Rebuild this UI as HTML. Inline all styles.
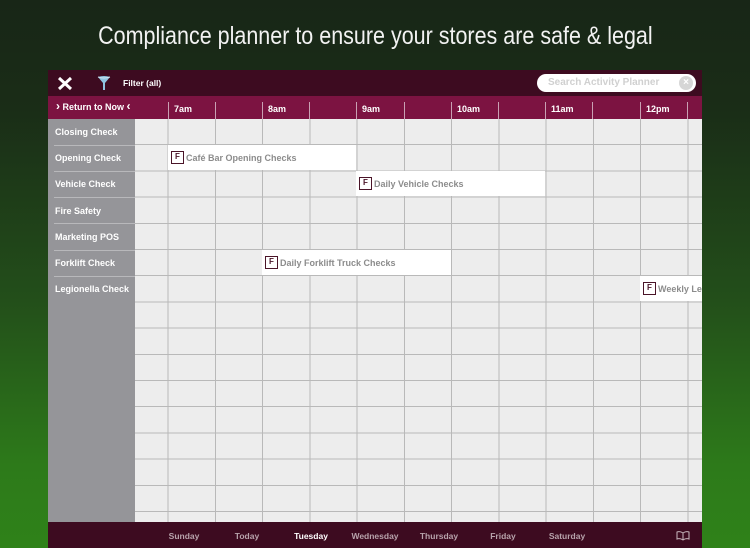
<!DOCTYPE html>
<html><head><meta charset="utf-8"><style>
*{margin:0;padding:0;box-sizing:border-box}
body{width:750px;height:548px;overflow:hidden;position:relative;font-family:"Liberation Sans",sans-serif;
background:linear-gradient(180deg,#182617 0%,#1a2d17 20%,#234f1a 55%,#2d7a1a 85%,#2f8219 100%)}
.a{position:absolute}
.title{left:0;width:750px;top:20px;text-align:center;color:#f2f2f2;font-size:25px;line-height:32px;white-space:nowrap}
.title span{display:inline-block;transform:scaleX(0.86);transform-origin:center}
.top{left:48px;top:70px;width:654px;height:26px;background:#3d0b20}
.hdr{left:48px;top:96px;width:654px;height:23px;background:#7c1341}
.lab{left:48px;top:119px;width:87px;height:403px;background:#959599}
.grid{left:135px;top:119px;width:567px;height:403px;background-color:#ededed;
background-image:repeating-linear-gradient(90deg,transparent 0,transparent 32.5px,#b9b9b9 32.5px,#b9b9b9 33.5px,transparent 33.5px,transparent 47.25px),
repeating-linear-gradient(180deg,transparent 0,transparent 25.2px,#b9b9b9 25.2px,#b9b9b9 26.2px);}
.bot{left:48px;top:522px;width:654px;height:26px;background:#3d0b20}
.lt{color:#fff;font-weight:bold;font-size:9px;left:55px}
.sep{left:54px;width:81px;height:1px;background:#b8b8bb}
.tick{top:102px;width:1px;height:17px;background:#c9a0b3}
.hl{top:104px;color:#fff;font-weight:bold;font-size:9px}
.ev{height:25px;background:#fff;color:#8c8c8c;font-weight:bold;font-size:9px;line-height:26px;padding-left:18px;white-space:nowrap;overflow:hidden}
.ev i{position:absolute;left:3px;top:6px;width:13px;height:13px;border:1.5px solid #4a1428;font-style:normal;color:#4a1428;font-size:8px;font-weight:bold;line-height:10px;text-align:center}
.day{top:531px;color:#b7a3ab;font-weight:bold;font-size:8.5px;transform:translateX(-50%)}
</style></head><body>
<div class="a title"><span>Compliance planner to ensure your stores are safe &amp; legal</span></div>
<div class="a top"></div>
<svg class="a" style="left:57px;top:76px" width="16" height="15"><path d="M2 2L14 13M14 2L2 13" stroke="#fff" stroke-width="3"/></svg>
<svg class="a" style="left:97px;top:75px" width="14" height="16"><path d="M1 2Q7 0 13 2L8 8V15H6V8Z" fill="#8fc3e0"/><path d="M1 2Q7 4 13 2" stroke="#cfe6f3" fill="none"/></svg>
<div class="a" style="left:123px;top:78px;color:#fff;font-size:8.5px;font-weight:bold">Filter (all)</div>
<div class="a" style="left:537px;top:74px;width:159px;height:18px;background:#fff;border-radius:9px"></div>
<div class="a" style="left:548px;top:77px;color:#d0d0d0;font-size:10px;font-weight:bold">Search Activity Planner</div>
<div class="a" style="left:679px;top:76px;width:14px;height:14px;border-radius:7px;background:#d6d6d6;color:#fff;font-size:10px;line-height:14px;text-align:center;font-weight:bold">×</div>
<div class="a hdr"></div>
<div class="a" style="left:56px;top:101px;color:#fff;font-weight:bold;font-size:9px"><span style="font-size:12px;line-height:10px">›</span> Return to Now <span style="font-size:12px;line-height:10px">‹</span></div>
<div class="a tick" style="left:168px"></div><div class="a tick" style="left:215px"></div><div class="a tick" style="left:262px"></div><div class="a tick" style="left:309px"></div><div class="a tick" style="left:356px"></div><div class="a tick" style="left:404px"></div><div class="a tick" style="left:451px"></div><div class="a tick" style="left:498px"></div><div class="a tick" style="left:545px"></div><div class="a tick" style="left:592px"></div><div class="a tick" style="left:640px"></div><div class="a tick" style="left:687px"></div>
<div class="a hl" style="left:174px">7am</div><div class="a hl" style="left:268px">8am</div><div class="a hl" style="left:362px">9am</div><div class="a hl" style="left:457px">10am</div><div class="a hl" style="left:551px">11am</div><div class="a hl" style="left:646px">12pm</div>
<div class="a lab"></div>
<div class="a sep" style="top:145px"></div><div class="a sep" style="top:171px"></div><div class="a sep" style="top:197px"></div><div class="a sep" style="top:223px"></div><div class="a sep" style="top:250px"></div><div class="a sep" style="top:276px"></div>
<div class="a lt" style="top:127px">Closing Check</div>
<div class="a lt" style="top:153px">Opening Check</div>
<div class="a lt" style="top:179px">Vehicle Check</div>
<div class="a lt" style="top:206px">Fire Safety</div>
<div class="a lt" style="top:232px">Marketing POS</div>
<div class="a lt" style="top:258px">Forklift Check</div>
<div class="a lt" style="top:284px">Legionella Check</div>
<div class="a grid"></div>
<div class="a ev" style="left:168px;top:145px;width:188px"><i>F</i>Café Bar Opening Checks</div>
<div class="a ev" style="left:356px;top:171px;width:189px"><i>F</i>Daily Vehicle Checks</div>
<div class="a ev" style="left:262px;top:250px;width:189px"><i>F</i>Daily Forklift Truck Checks</div>
<div class="a ev" style="left:640px;top:276px;width:62px"><i>F</i>Weekly Legionella</div>
<div class="a bot"></div>
<div class="a day" style="left:184px">Sunday</div>
<div class="a day" style="left:247px">Today</div>
<div class="a day" style="left:311px;color:#fff">Tuesday</div>
<div class="a day" style="left:375px">Wednesday</div>
<div class="a day" style="left:439px">Thursday</div>
<div class="a day" style="left:503px">Friday</div>
<div class="a day" style="left:567px">Saturday</div>
<svg class="a" style="left:676px;top:530px" width="14" height="11"><path d="M1 2V9Q4 8 7 10Q10 8 13 9V2Q10 1 7 3Q4 1 1 2ZM7 3V10" stroke="#c9b8bf" fill="none" stroke-width="1"/></svg>
</body></html>
